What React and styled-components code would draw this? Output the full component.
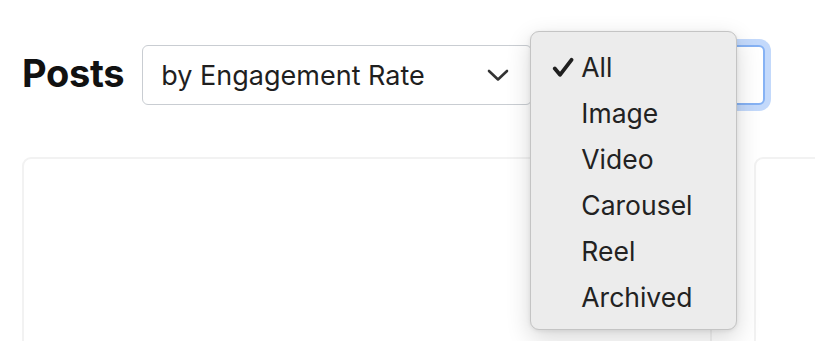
import React from "react";
import styled, { createGlobalStyle } from "styled-components";

const GlobalStyle = createGlobalStyle`
  html, body {
    margin: 0;
    padding: 0;
    background: #ffffff;
    overflow: hidden;
  }
  body {
    font-family: Inter, "Noto Sans", "Liberation Sans", sans-serif;
    color: #1d1d1f;
  }
`;

const Page = styled.div`
  width: 815px;
  height: 341px;
  overflow: hidden;
  box-sizing: border-box;
  padding: 45px 0 0 22px;
`;

const Header = styled.div`
  display: flex;
  align-items: center;
  height: 60px;
`;

const Title = styled.h2`
  margin: -4px 18px 0 0;
  font-size: 38px;
  line-height: 1;
  font-weight: 700;
  letter-spacing: -0.3px;
  color: #111;
`;

const SelectWrap = styled.div`
  position: relative;
  margin-left: ${(p) => p.$gap || 0}px;
`;

const SelectBox = styled.div`
  box-sizing: border-box;
  width: ${(p) => p.$width}px;
  height: 60px;
  display: flex;
  align-items: center;
  justify-content: space-between;
  padding: 0 22px 0 18px;
  background: #ffffff;
  border: ${(p) => (p.$focused ? "2px solid #86b2f4" : "1px solid #c9cdd2")};
  border-radius: 6px;
  box-shadow: ${(p) => (p.$focused ? "0 0 0 6px #c3d9fb" : "none")};
  font-size: 27px;
  color: #1f1f1f;
`;

const Chevron = () => (
  <svg width="22" height="13" viewBox="0 0 22 13" fill="none">
    <path d="M2 2 L11 10.5 L20 2" stroke="#333" strokeWidth="2.6" strokeLinecap="round" strokeLinejoin="round" />
  </svg>
);

const Menu = styled.div`
  position: absolute;
  left: -22px;
  top: -14px;
  width: 207px;
  box-sizing: border-box;
  padding: 12px 0 9px;
  background: #ececec;
  border: 1px solid #c4c4c4;
  border-radius: 9px;
  box-shadow: 0 8px 24px rgba(0, 0, 0, 0.16), 0 1px 4px rgba(0, 0, 0, 0.08);
  z-index: 10;
`;

const MenuItem = styled.div`
  height: 46px;
  display: flex;
  align-items: center;
  font-size: 26.5px;
  color: #222;
`;

const CheckSlot = styled.span`
  width: 50px;
  display: flex;
  justify-content: flex-end;
  padding-right: 7px;
  box-sizing: border-box;
`;

const Check = () => (
  <svg width="22" height="21" viewBox="0 0 22 21" fill="none">
    <path d="M2.8 11.5 L8 17.8 L19.5 2.8" stroke="#1f1f1f" strokeWidth="3.8" strokeLinecap="round" strokeLinejoin="round" />
  </svg>
);

const Cards = styled.div`
  display: flex;
  gap: 42px;
  margin-top: 52px;
`;

const Card = styled.div`
  flex: 0 0 auto;
  width: 690px;
  height: 300px;
  box-sizing: border-box;
  border: 2px solid #f2f2f2;
  border-radius: 9px;
  background: #fff;
`;

const options = ["All", "Image", "Video", "Carousel", "Reel", "Archived"];

export default function App() {
  return (
    <>
      <GlobalStyle />
      <Page>
        <Header>
          <Title>Posts</Title>
          <SelectWrap>
            <SelectBox $width={390}>
              <span>by Engagement Rate</span>
              <Chevron />
            </SelectBox>
          </SelectWrap>
          <SelectWrap $gap={20}>
            <SelectBox $width={213} $focused />
            <Menu>
              {options.map((o, i) => (
                <MenuItem key={o}>
                  <CheckSlot>{i === 0 ? <Check /> : null}</CheckSlot>
                  <span>{o}</span>
                </MenuItem>
              ))}
            </Menu>
          </SelectWrap>
        </Header>
        <Cards>
          <Card />
          <Card />
        </Cards>
      </Page>
    </>
  );
}
